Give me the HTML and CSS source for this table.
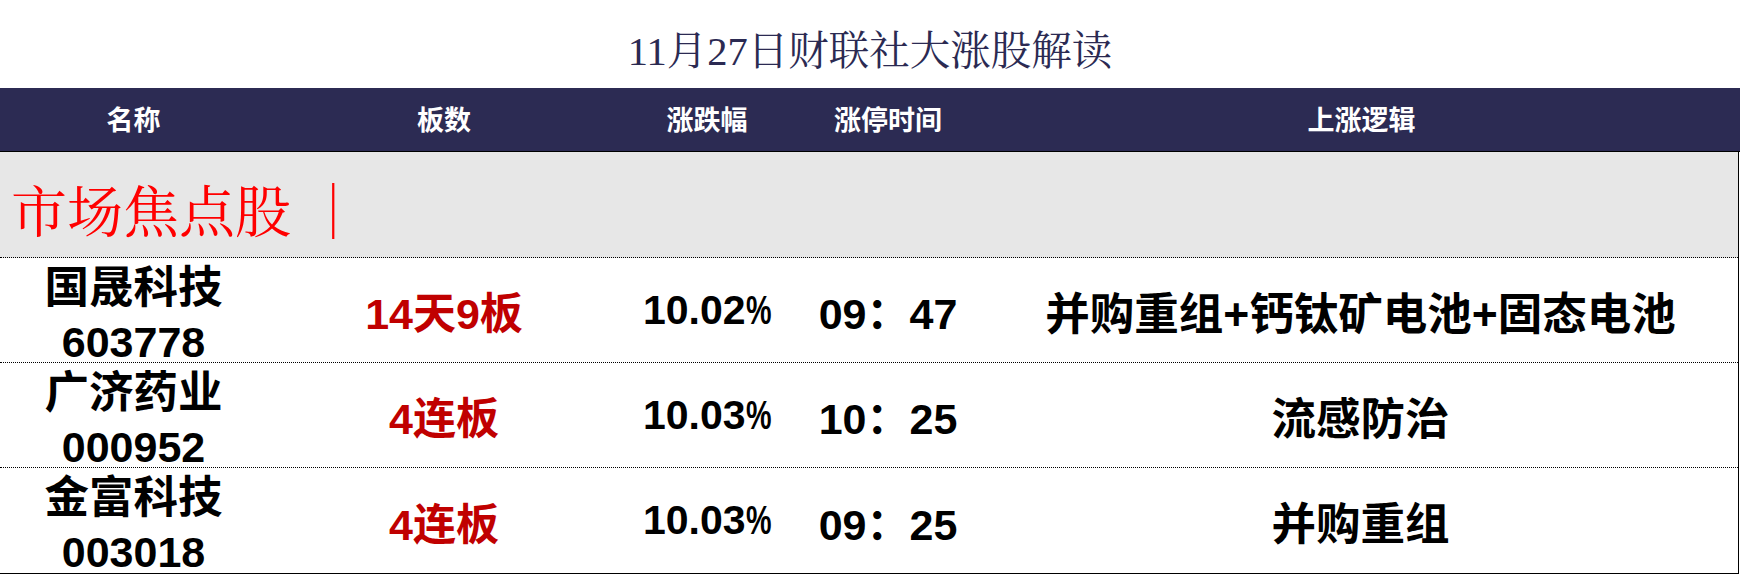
FILE: index.html
```html
<!DOCTYPE html>
<html lang="zh-CN">
<head>
<meta charset="utf-8">
<title>11月27日财联社大涨股解读</title>
<link rel="stylesheet" href="styles.css">
</head>
<body>
<div class="page">
  <h1 class="title">11月27日财联社大涨股解读</h1>
  <div class="table">
    <div class="row head">
      <div class="cell">名称</div>
      <div class="cell">板数</div>
      <div class="cell">涨跌幅</div>
      <div class="cell">涨停时间</div>
      <div class="cell">上涨逻辑</div>
    </div>
    <div class="body">
      <div class="section">市场焦点股 ｜</div>
      <div class="row data">
        <div class="cell name"><span class="nm">国晟科技</span><span class="code">603778</span></div>
        <div class="cell board">14天9板</div>
        <div class="cell pct">10.02<span class="pc">%</span></div>
        <div class="cell time">09：47</div>
        <div class="cell logic">并购重组+钙钛矿电池+固态电池</div>
      </div>
      <div class="row data">
        <div class="cell name"><span class="nm">广济药业</span><span class="code">000952</span></div>
        <div class="cell board">4连板</div>
        <div class="cell pct">10.03<span class="pc">%</span></div>
        <div class="cell time">10：25</div>
        <div class="cell logic">流感防治</div>
      </div>
      <div class="row data last">
        <div class="cell name"><span class="nm">金富科技</span><span class="code">003018</span></div>
        <div class="cell board">4连板</div>
        <div class="cell pct">10.03<span class="pc">%</span></div>
        <div class="cell time">09：25</div>
        <div class="cell logic">并购重组</div>
      </div>
    </div>
  </div>
</div>
</body>
</html>
```

FILE: styles.css
```css
* {
  box-sizing: border-box;
}

body {
  margin: 0;
  background: #ffffff;
}

.page {
  width: 1740px;
}

.title {
  margin: 0;
  height: 88px;
  padding-top: 6px;
  display: flex;
  align-items: center;
  justify-content: center;
  font-family: "Liberation Serif", "Noto Serif CJK SC", "Noto Sans CJK SC", serif;
  font-weight: 400;
  font-size: 40.5px;
  color: #2b2a52;
}

.row {
  display: grid;
  grid-template-columns: 267px 354px 172px 190px 1fr;
  align-items: center;
}

.cell {
  text-align: center;
}

.head {
  height: 64px;
  background: #2c2b53;
  border-bottom: 1px solid #000000;
  color: #ffffff;
  font-family: "Noto Sans CJK SC", sans-serif;
  font-weight: 700;
  font-size: 27px;
  line-height: 1;
  padding-bottom: 2px;
}

.body {
  border-right: 1px solid #000000;
  border-bottom: 1px solid #000000;
  margin-right: 1px;
}

.section {
  height: 106px;
  background: #e7e7e7;
  border-bottom: 1px dotted #000000;
  display: flex;
  align-items: center;
  padding-left: 11px;
  padding-top: 6px;
  font-family: "Noto Serif CJK SC", "Noto Sans CJK SC", serif;
  font-weight: 400;
  font-size: 56px;
  color: #ff0000;
  white-space: pre;
}

.data {
  height: 105px;
  border-bottom: 1px dotted #000000;
  font-family: "Liberation Sans", "Noto Sans CJK SC", sans-serif;
  font-weight: 700;
  font-size: 43px;
  color: #000000;
}

.data.last {
  height: 105px;
  border-bottom: none;
}

.name {
  align-self: stretch;
  display: flex;
  flex-direction: column;
  align-items: center;
  justify-content: flex-start;
  padding-top: 10px;
  gap: 14px;
  line-height: 40px;
}

.nm {
  font-size: 44.5px;
}

.code {
  font-size: 43px;
}

.board {
  color: #c00000;
}

.pct {
  font-size: 41px;
}

.pc {
  display: inline-block;
  transform: scaleX(0.7);
  transform-origin: left center;
  margin-right: -0.27em;
}

.logic {
  font-size: 44.5px;
}
```
